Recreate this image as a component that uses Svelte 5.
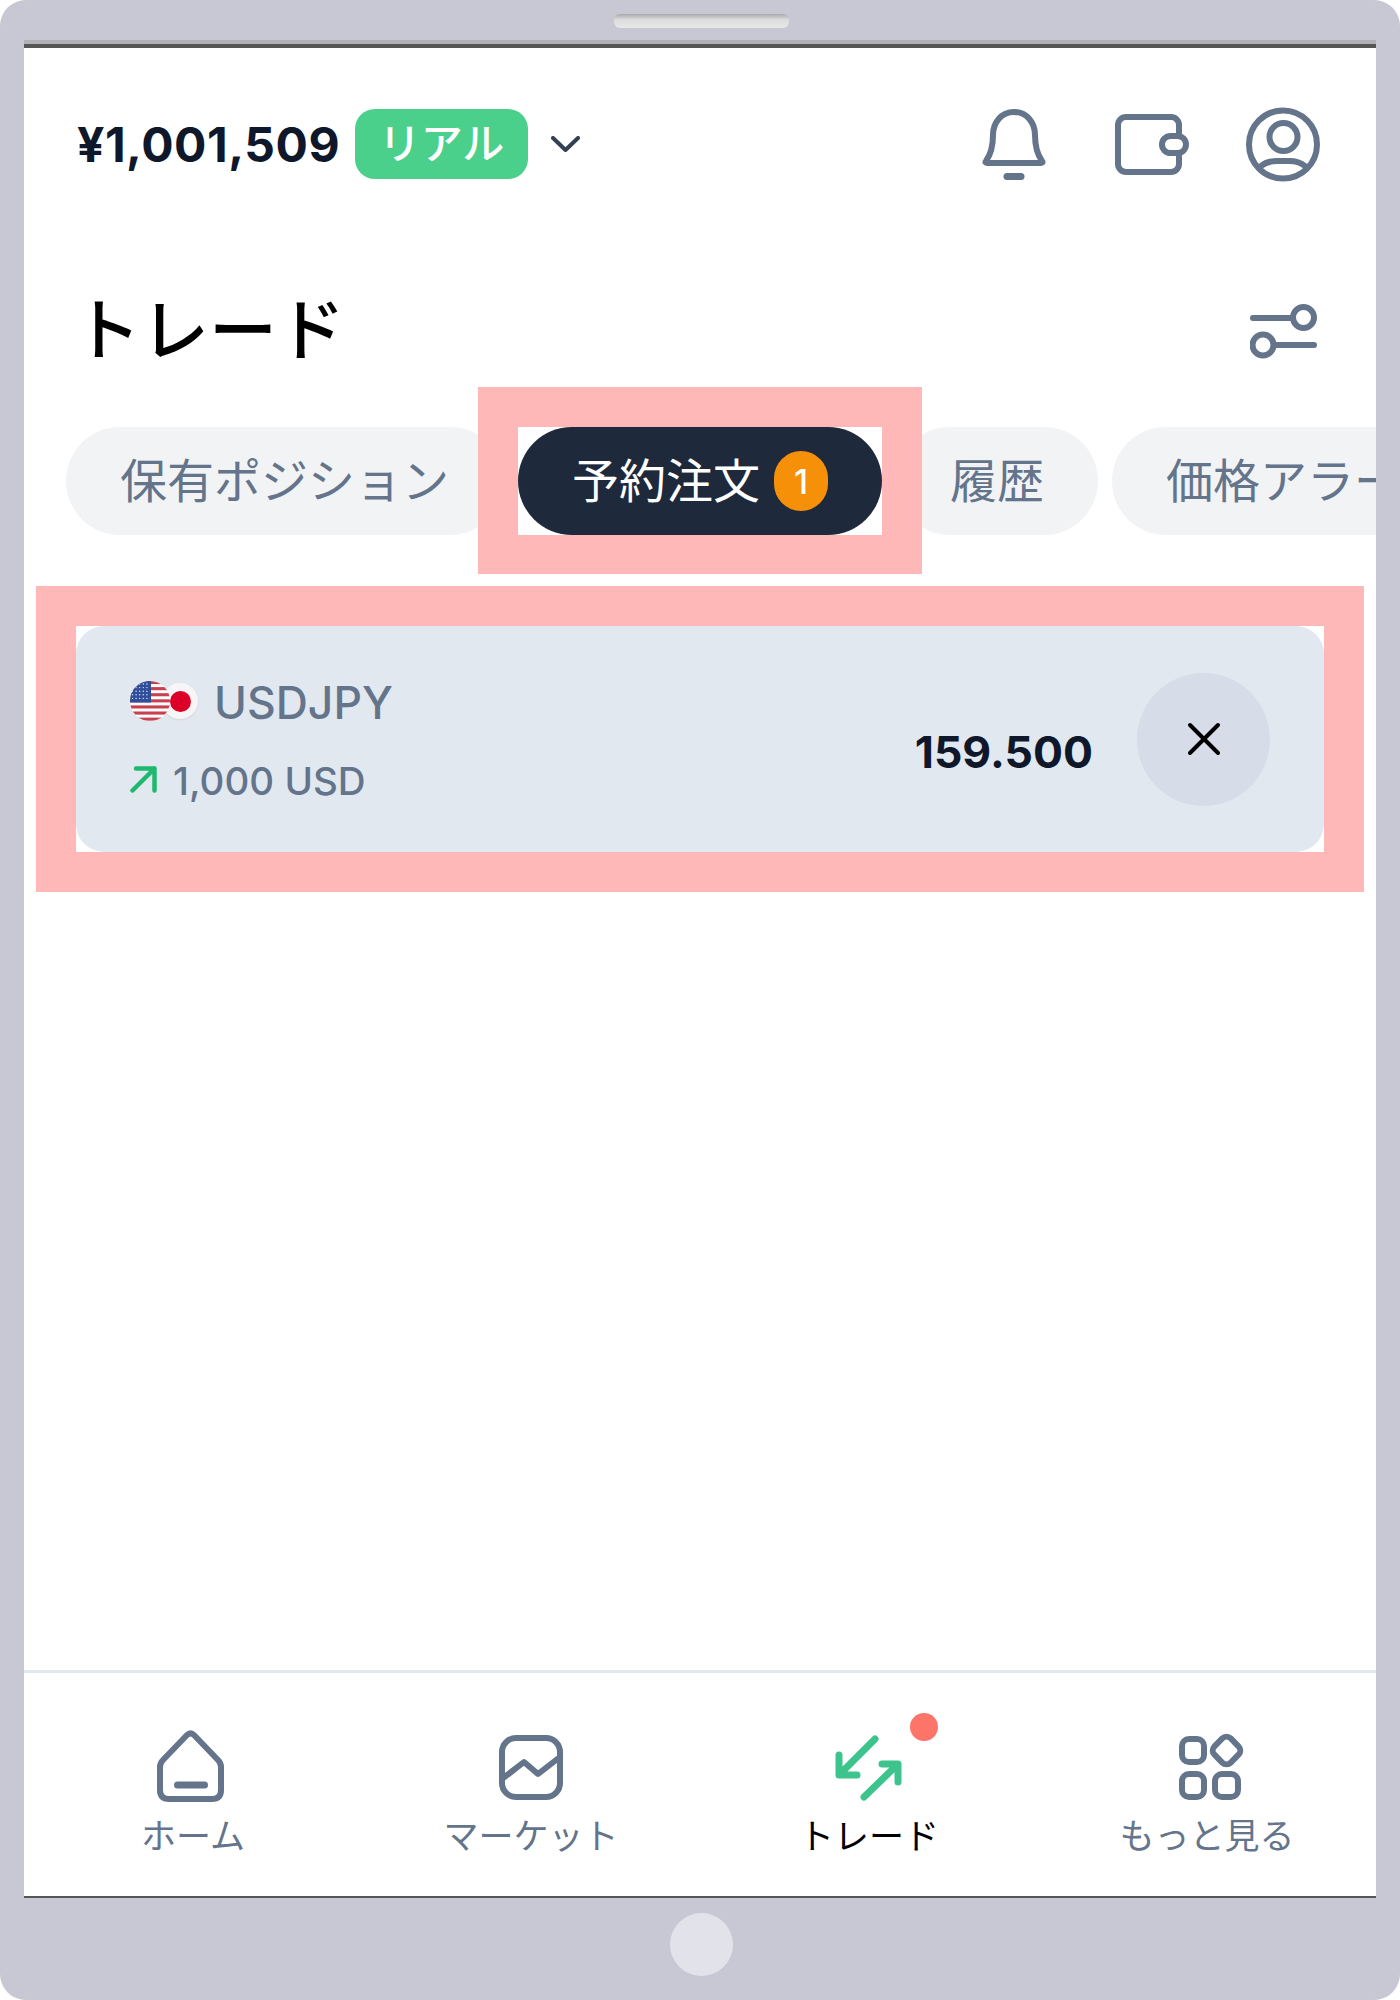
<script>
	const tabs = [
		{ label: '保有ポジション' },
		{ label: '予約注文', count: 1, active: true },
		{ label: '履歴' },
		{ label: '価格アラート' }
	];
	const stripes = [0, 1, 2, 3, 4, 5, 6];
	const stars = [];
	for (let r = 0; r < 5; r++) {
		for (let c = 0; c < 5; c++) stars.push({ x: 2.5 + c * 3.6, y: 3 + r * 3.6 });
	}
</script>

<div class="frame">
	<div class="top-bar"><div class="speaker"></div></div>
	<div class="screen">
		<header class="header">
			<div class="balance">
				<span class="amount">¥1,001,509</span>
				<span class="real">リアル</span>
				<svg class="chevron" width="29" height="16" viewBox="0 0 29 16"><path d="M2 2 L14.5 14 L27 2" /></svg>
			</div>
			<div class="header-icons">
				<svg width="66" height="71" viewBox="0 0 66 71">
					<path d="M33 3 C20 3 12 14 12 26 C12 38 10 45 5 52 Q3.5 54 6 54 H60 Q62.5 54 61 52 C56 45 54 38 54 26 C54 14 46 3 33 3 Z" />
					<path class="thick" d="M26 67.5 H40" />
				</svg>
				<svg width="85" height="61" viewBox="-3 0 85 61">
					<rect x="11" y="3" width="61" height="55" rx="8" />
					<rect class="clasp" x="55" y="22" width="24" height="17" rx="8.5" />
				</svg>
				<svg width="74" height="75" viewBox="0 0 74 75">
					<circle cx="37" cy="37.5" r="34" />
					<circle cx="37.5" cy="30" r="14" />
					<path d="M15 59 Q21 54 31 54 H43 Q53 54 59 59" />
				</svg>
			</div>
		</header>

		<div class="title-row">
			<h1>トレード</h1>
			<svg width="67" height="55" viewBox="0 0 67 55">
				<path d="M3 14 H43" />
				<circle cx="53.5" cy="13.5" r="10.5" />
				<circle cx="13" cy="41" r="10.5" />
				<path d="M24 41 H64" />
			</svg>
		</div>

		<div class="tabs">
			{#each tabs as tab}
				<div class="tab" class:active={tab.active}>
					<span class="tab-label">{tab.label}</span>
					{#if tab.count}<span class="count">{tab.count}</span>{/if}
					{#if tab.active}<div class="ring"></div>{/if}
				</div>
			{/each}
		</div>

		<div class="card">
			<div class="info">
				<div class="pair">
					<div class="flags">
						<div class="jp"><span></span></div>
						<svg class="us" width="40" height="40" viewBox="0 0 40 40">
							<defs><clipPath id="us-clip"><circle cx="20" cy="20" r="20" /></clipPath></defs>
							<g clip-path="url(#us-clip)">
								<rect width="40" height="40" fill="#fff" />
								{#each stripes as s}
									<rect y={s * 6.1} width="40" height="3.1" fill="#c8404e" />
								{/each}
								<rect width="21" height="21.5" fill="#2f4f9c" />
								{#each stars as st}
									<circle cx={st.x} cy={st.y} r="0.7" fill="#dfe6f5" />
								{/each}
							</g>
						</svg>
					</div>
					<span class="symbol">USDJPY</span>
				</div>
				<div class="size">
					<svg width="27" height="27" viewBox="0 0 27 27"><path d="M2.5 24.5 L24.5 2.5 M6 2.5 H24.5 V24.5" /></svg>
					<span>1,000 USD</span>
				</div>
			</div>
			<div class="price">159.500</div>
			<button class="close" aria-label="閉じる">
				<svg width="34" height="34" viewBox="0 0 34 34"><path d="M3 3 L31 31 M31 3 L3 31" /></svg>
			</button>
			<div class="ring"></div>
		</div>

		<div class="spacer"></div>

		<nav class="nav">
			<div class="nav-item">
				<svg width="100" height="74" viewBox="0 0 100 74">
					<path d="M44 6 Q47.5 2.5 51 6 L75 31 Q78 34 78 38 V61 Q78 70 69 70 H26 Q17 70 17 61 V38 Q17 34 20 31 Z" />
					<path class="thick" d="M34.5 56 H61.5" />
				</svg>
				<span>ホーム</span>
			</div>
			<div class="nav-item">
				<svg width="100" height="74" viewBox="0 0 100 74">
					<rect x="21" y="9" width="58" height="59" rx="14" />
					<path d="M21 50 L43 33 L57 45 L79 28" />
				</svg>
				<span>マーケット</span>
			</div>
			<div class="nav-item current">
				<svg class="green" width="100" height="74" viewBox="0 0 100 74">
					<path d="M56 10 L22 44 M20 26 V46 H38" />
					<path d="M45 68 L78 36 M63 35 H79 V53" />
				</svg>
				<div class="dot"></div>
				<span>トレード</span>
			</div>
			<div class="nav-item">
				<svg width="100" height="74" viewBox="0 0 100 74">
					<rect x="25" y="10" width="22" height="23" rx="7" />
					<rect x="58" y="10" width="23" height="23" rx="6" transform="rotate(45 69.5 21.5)" />
					<rect x="25" y="45" width="22" height="23" rx="7" />
					<rect x="58" y="45" width="23" height="23" rx="7" />
				</svg>
				<span>もっと見る</span>
			</div>
		</nav>
	</div>
	<div class="bottom-bar"><div class="home-button"></div></div>
</div>

<style>
	:global(body) {
		margin: 0;
		background: #fff;
	}

	.frame {
		width: 1400px;
		height: 2000px;
		box-sizing: border-box;
		display: flex;
		flex-direction: column;
		background: #c8c8d4;
		border-radius: 26px;
		font-family: Inter, 'Noto Sans CJK JP', sans-serif;
	}

	.top-bar {
		height: 44px;
		display: flex;
		justify-content: center;
		padding: 14px 0 0 2px;
		box-sizing: border-box;
		flex: none;
	}

	.speaker {
		width: 175px;
		height: 14px;
		border-radius: 6px;
		background: linear-gradient(#a9a9ad, #dcdcdc 40%, #e8e8e8);
	}

	.screen {
		margin: 0 24px;
		height: 1854px;
		flex: none;
		box-sizing: border-box;
		background: #fff;
		border-top: 4px solid #555;
		box-shadow: 0 -4px 0 #b2b2b6;
		border-bottom: 2px solid #555;
		display: flex;
		flex-direction: column;
		overflow: hidden;
	}

	svg {
		flex: none;
		display: block;
		fill: none;
		stroke: #64748b;
		stroke-width: 6;
		stroke-linecap: round;
		stroke-linejoin: round;
	}

	.thick {
		stroke-width: 7;
	}

	.clasp {
		fill: #fff;
	}

	.header {
		height: 192px;
		flex: none;
		display: flex;
		align-items: center;
		justify-content: space-between;
		padding: 0 56px 0 53px;
	}

	.balance {
		display: flex;
		align-items: center;
	}

	.amount {
		font-size: 48px;
		font-weight: 700;
		color: #0f172a;
		letter-spacing: 0.5px;
	}

	.real {
		margin-left: 15px;
		width: 173px;
		height: 70px;
		box-sizing: border-box;
		padding-bottom: 8px;
		border-radius: 20px;
		background: #4bd08b;
		color: #fff;
		font-size: 42px;
		font-weight: 500;
		font-family: 'Noto Sans CJK JP', sans-serif;
		display: flex;
		align-items: center;
		justify-content: center;
	}

	.chevron {
		margin-left: 23px;
		stroke: #334155;
		stroke-width: 4;
	}

	.header-icons {
		display: flex;
		align-items: center;
		gap: 57px;
	}

	.title-row {
		flex: none;
		margin: 60px 59px 27px 49px;
		height: 60px;
		display: flex;
		align-items: center;
		justify-content: space-between;
	}

	.title-row svg {
		margin-top: 2px;
	}

	h1 {
		margin: 0 0 8px;
		font-size: 68px;
		line-height: 60px;
		font-weight: 500;
		color: #000;
		font-family: 'Noto Sans CJK JP', sans-serif;
	}

	.tabs {
		flex: none;
		display: flex;
		gap: 14px;
		padding: 40px 0 39px 42px;
		overflow: hidden;
	}

	.tab {
		flex: none;
		height: 108px;
		padding: 0 54px;
		box-sizing: border-box;
		border-radius: 54px;
		background: #f1f3f5;
		color: #64748b;
		font-size: 47px;
		font-family: 'Noto Sans CJK JP', sans-serif;
		display: flex;
		align-items: center;
	}

	.tab:first-child {
		padding-right: 55px;
	}

	.tab-label {
		margin-bottom: 8px;
	}

	.tab.active {
		position: relative;
		background: #1e293b;
		color: #fff;
		padding: 0;
		width: 364px;
		justify-content: center;
	}

	.count {
		margin-left: 14px;
		width: 54px;
		height: 60px;
		border-radius: 30px;
		background: #f79009;
		color: #fff;
		font-size: 34px;
		font-weight: 500;
		font-family: Inter, sans-serif;
		display: flex;
		align-items: center;
		justify-content: center;
	}

	.ring {
		position: absolute;
		inset: -40px;
		border: 40px solid #ffb8b8;
		pointer-events: none;
	}

	.card {
		position: relative;
		flex: none;
		margin: 52px 52px 0;
		height: 226px;
		box-sizing: border-box;
		padding: 0 54px;
		background: #e2e8f0;
		border-radius: 28px;
		display: flex;
		align-items: center;
	}

	.info {
		flex: 1;
		display: flex;
		flex-direction: column;
		gap: 38px;
		padding-top: 2px;
		color: #64748b;
	}

	.pair, .size {
		height: 40px;
		display: flex;
		align-items: center;
	}

	.symbol {
		margin: 3px 0 0 17px;
		font-size: 44.5px;
		font-weight: 500;
	}

	.flags {
		position: relative;
		width: 67px;
		height: 40px;
	}

	.us {
		position: absolute;
		left: 0;
		top: 0;
		stroke: none;
	}

	.jp {
		position: absolute;
		left: 32px;
		top: 2px;
		width: 36px;
		height: 36px;
		border-radius: 50%;
		background: #f6f6f6;
		box-shadow: 0 1px 2px #d5d5d5;
		display: flex;
		align-items: center;
		justify-content: center;
	}

	.jp span {
		width: 21px;
		height: 21px;
		border-radius: 50%;
		background: #dc0028;
	}

	.size svg {
		stroke: #1fb86f;
		stroke-width: 4.5;
	}

	.size span {
		margin: 3px 0 0 16px;
		font-size: 38.5px;
		font-weight: 500;
	}

	.price {
		margin: 26px 44px 0 0;
		font-size: 44.5px;
		font-weight: 700;
		color: #0f172a;
	}

	.close {
		flex: none;
		width: 133px;
		height: 133px;
		padding: 0;
		border: none;
		border-radius: 50%;
		background: #d6dde8;
		display: flex;
		align-items: center;
		justify-content: center;
	}

	.close svg {
		stroke: #000;
		stroke-width: 4;
	}

	.spacer {
		flex: 1;
	}

	.nav {
		flex: none;
		height: 226px;
		box-sizing: border-box;
		border-top: 3px solid #e2e8f0;
		display: grid;
		grid-template-columns: repeat(4, 1fr);
		padding-top: 56px;
	}

	.nav-item {
		position: relative;
		display: flex;
		flex-direction: column;
		align-items: center;
		color: #64748b;
		font-size: 35px;
		font-family: 'Noto Sans CJK JP', sans-serif;
	}

	.nav-item span {
		margin-top: 7px;
		line-height: 48px;
	}

	.nav-item.current {
		color: #000;
	}

	.green {
		stroke: #3cc48c;
		stroke-width: 7;
	}

	.dot {
		position: absolute;
		left: 210px;
		top: -16px;
		width: 28px;
		height: 28px;
		border-radius: 50%;
		background: #fd7468;
	}

	.bottom-bar {
		flex: 1;
		display: flex;
		justify-content: center;
		padding: 15px 0 0 3px;
	}

	.home-button {
		width: 63px;
		height: 63px;
		border-radius: 50%;
		background: #e2e3ea;
	}
</style>
